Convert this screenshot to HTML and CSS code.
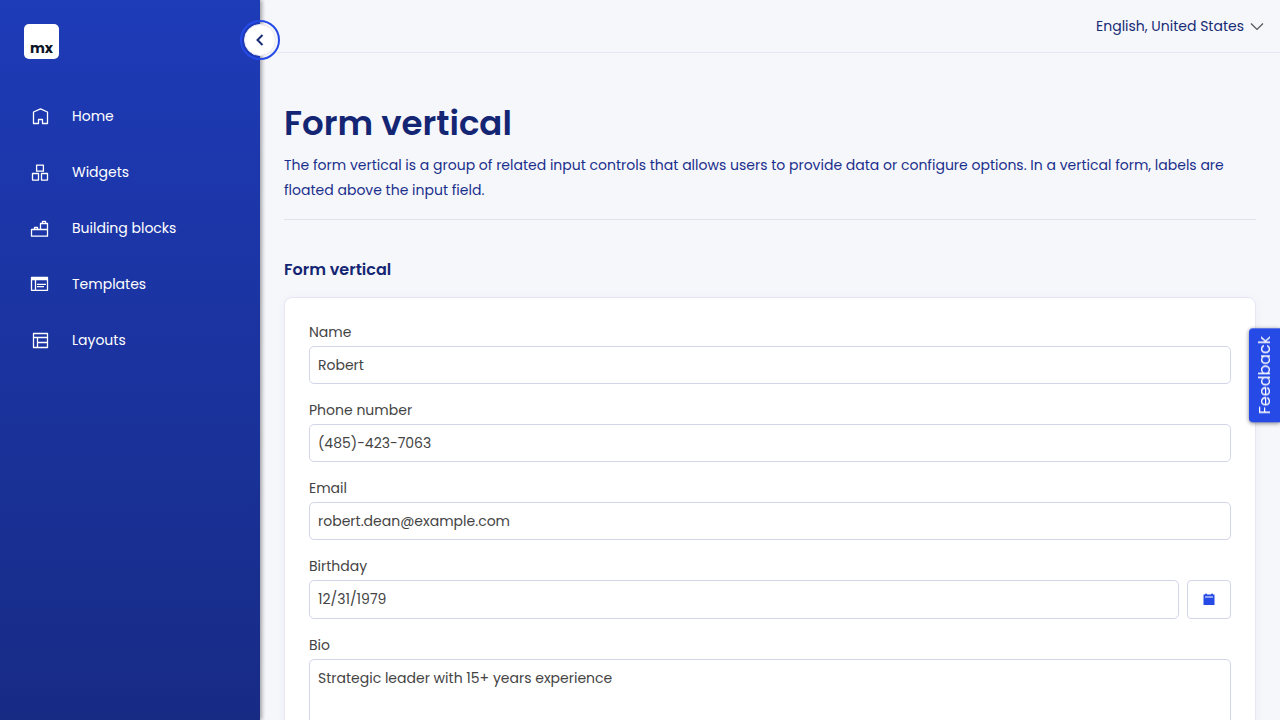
FILE: index.html
```html
<!DOCTYPE html>
<html lang="en-US">
<head>
<meta charset="utf-8">
<meta name="viewport" content="width=device-width, initial-scale=1">
<title>Form vertical</title>
<link rel="stylesheet" href="styles.css">
</head>
<body>
<div class="app">
  <aside class="sidebar">
    <a class="logo" href="#"><span class="logo-text">mx</span></a>
    <button class="toggle" type="button" aria-label="Toggle sidebar">
      <svg width="16" height="16" viewBox="0 0 16 16" fill="none" stroke="currentColor" stroke-width="2"><path d="M10.500 3 5.500 8l5 5"/></svg>
    </button>
    <nav class="menu">
      <a class="menu-item" href="#">
        <svg class="icon" viewBox="0 0 20 20"><path d="M3.500 17.500V6L10.500 2.800 17.500 6v11.500h-5v-4h-4v4z"/></svg>
        <span>Home</span>
      </a>
      <a class="menu-item" href="#">
        <svg class="icon" viewBox="0 0 20 20"><path d="M6.600 3.200h6.800v6H6.600zM2.500 11.500h6v6.600h-6zM11.500 11.500h6v6.600h-6z"/></svg>
        <span>Widgets</span>
      </a>
      <a class="menu-item" href="#">
        <svg class="icon" viewBox="0 0 20 20"><path d="M1.500 11.500h16v6.700h-16zM4.500 11.500v-2h3v2M10.500 11.500v-6h7v6M12.500 5.500V3.300h3v2.200"/></svg>
        <span>Building blocks</span>
      </a>
      <a class="menu-item" href="#">
        <svg class="icon" viewBox="0 0 20 20"><path d="M1.500 3.500h16v12.800h-16zM1.500 4.500h16M1.500 5.500h16M5.500 6v10M7 10.400h9M7 12.600h7"/></svg>
        <span>Templates</span>
      </a>
      <a class="menu-item" href="#">
        <svg class="icon" viewBox="0 0 20 20"><path d="M3.500 3.500h14v14h-14zM3.500 7.500h14M7.500 7.500v10M7.500 12.500h10"/></svg>
        <span>Layouts</span>
      </a>
    </nav>
  </aside>

  <div class="content">
    <header class="topbar">
      <button class="language" type="button">
        <span>English, United States</span>
        <svg width="14" height="14" viewBox="0 0 14 14" fill="none" stroke="#555" stroke-width="1.200"><path d="M1 4.500 7 10.500l6-6"/></svg>
      </button>
    </header>
    <main class="page">
      <div class="page-header">
        <h1 class="page-title">Form vertical</h1>
        <p class="page-text">The form vertical is a group of related input controls that allows users to provide data or configure options. In a vertical form, labels are floated above the input field.</p>
      </div>
      <h2 class="section-title">Form vertical</h2>
      <form class="card">
        <div class="field">
          <label for="name">Name</label>
          <input class="control" id="name" type="text" value="Robert">
        </div>
        <div class="field">
          <label for="phone">Phone number</label>
          <input class="control" id="phone" type="text" value="(485)-423-7063">
        </div>
        <div class="field">
          <label for="email">Email</label>
          <input class="control" id="email" type="text" value="robert.dean@example.com">
        </div>
        <div class="field">
          <label for="birthday">Birthday</label>
          <div class="date-row">
            <input class="control" id="birthday" type="text" value="12/31/1979">
            <button class="date-button" type="button" aria-label="Show date picker">
              <svg width="12" height="14" viewBox="0 0 12 14"><path fill="currentColor" d="M.5 1.500H2V.8h2v.7h4V.8h2v.7h1.500V12H.5z"/><path stroke="#fff" d="M2 4h8"/></svg>
            </button>
          </div>
        </div>
        <div class="field">
          <label for="bio">Bio</label>
          <textarea class="control bio" id="bio" rows="5">Strategic leader with 15+ years experience</textarea>
        </div>
      </form>
    </main>
  </div>
  <button class="feedback" type="button">Feedback</button>
</div>
</body>
</html>
```

FILE: styles.css
```css
* {
  box-sizing: border-box;
}

body {
  margin: 0;
  background: #f6f7fb;
  color: #444;
  font: 14px/20px Poppins, Inter, sans-serif;
}

button,
input,
textarea {
  font: inherit;
  color: inherit;
}

.app {
  display: flex;
  height: 100vh;
  overflow: hidden;
}

.sidebar {
  position: relative;
  z-index: 1;
  flex: 0 0 260px;
  padding-top: 24px;
  background: linear-gradient(#1e3bb8, #172b85);
  box-shadow: 2px 0 4px rgba(0, 0, 0, 0.35);
  color: #fff;
}

.logo {
  display: flex;
  align-items: flex-end;
  justify-content: center;
  width: 35px;
  height: 35px;
  margin: 0 24px 29px;
  padding-bottom: 3px;
  border-radius: 5px;
  background: #fff;
  color: #0a1325;
  text-decoration: none;
}

.logo-text {
  font-size: 14px;
  font-weight: 700;
  line-height: 16px;
}

.toggle {
  position: absolute;
  top: 24px;
  right: -16px;
  display: grid;
  place-items: center;
  width: 32px;
  height: 32px;
  padding: 0;
  border: 1px solid #e7e7f3;
  border-radius: 50%;
  outline: 2px solid #264ae5;
  outline-offset: 2px;
  background: #fff;
  color: #172b75;
}

.menu-item {
  display: flex;
  align-items: center;
  gap: 22px;
  height: 56px;
  padding: 0 30px;
  color: #fff;
  text-decoration: none;
}

.icon {
  width: 20px;
  height: 20px;
  fill: none;
  stroke: currentColor;
  stroke-width: 1.3;
  stroke-linejoin: round;
}

.content {
  flex: 1;
  min-width: 0;
  overflow-y: auto;
  scrollbar-width: none;
}

.topbar {
  display: flex;
  justify-content: flex-end;
  padding: 16px;
  border-bottom: 1px solid #e7e7f3;
}

.language {
  display: flex;
  align-items: center;
  gap: 6px;
  padding: 0;
  border: 0;
  background: none;
  color: #172b75;
}

.page {
  padding: 48px 24px 24px;
}

.page-header {
  margin-bottom: 36px;
  padding-bottom: 16px;
  border-bottom: 1px solid #e1e3ea;
}

.page-title {
  margin: 0 0 8px;
  color: #142673;
  font-size: 34px;
  font-weight: 600;
  line-height: 44px;
}

.page-text {
  margin: 0;
  color: #1a2f8c;
  line-height: 25px;
}

.section-title {
  margin: 0 0 13px;
  color: #142673;
  font-size: 16px;
  font-weight: 600;
  line-height: 28px;
}

.card {
  display: flex;
  flex-direction: column;
  gap: 16px;
  padding: 24px;
  border: 1px solid #e7e7f3;
  border-radius: 8px;
  background: #fff;
  box-shadow: 0 2px 12px rgba(20, 38, 115, 0.04);
}

.field {
  display: flex;
  flex-direction: column;
  gap: 4px;
}

.control {
  width: 100%;
  height: 38px;
  padding: 8px;
  border: 1px solid #d3d5e9;
  border-radius: 5px;
  background: #fff;
}

.date-row {
  display: flex;
  gap: 8px;
  height: 39px;
}

.date-row .control {
  flex: 1;
  height: auto;
  padding-bottom: 9px;
}

.date-button {
  display: grid;
  place-items: center;
  width: 44px;
  padding: 0;
  border: 1px solid #d3d5e9;
  border-radius: 4px;
  background: #fff;
  color: #264ae5;
}

.bio {
  height: auto;
  resize: none;
}

.feedback {
  position: fixed;
  z-index: 2;
  top: 328px;
  right: 0;
  padding: 8px 4px;
  border: 0;
  border-radius: 0 4px 4px 0;
  background: #264ae5;
  box-shadow: 0 -1px 4px rgba(0, 0, 0, 0.5);
  color: #fff;
  font-size: 16px;
  line-height: 23px;
  writing-mode: vertical-rl;
  rotate: 180deg;
}
```
